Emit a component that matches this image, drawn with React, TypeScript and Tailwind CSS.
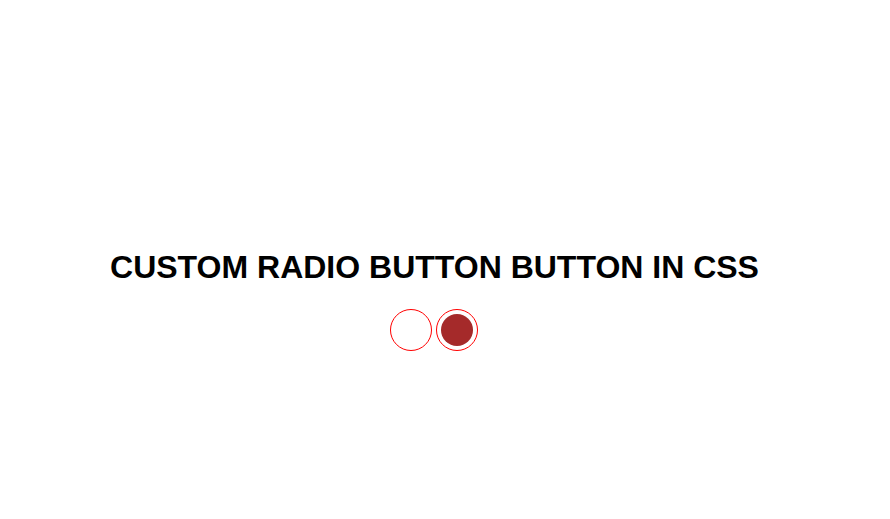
export default function App() {
  return (
    <div className="min-h-screen bg-white pt-[249px] pr-[21px] text-center font-['Liberation_Sans',Arial,sans-serif]">
      <h1 className="text-[32px] leading-[37px] font-bold text-black">CUSTOM RADIO BUTTON BUTTON IN CSS</h1>

      <div className="mt-[23px] flex justify-center gap-[4px] pr-[2px]">
        <label className="w-[42px] h-[42px] rounded-full border border-[#ff0000] p-[4px]">
          <input type="radio" name="demo" className="sr-only" />
        </label>
        <label className="w-[42px] h-[42px] rounded-full border border-[#ff0000] p-[4px]">
          <input type="radio" name="demo" defaultChecked className="sr-only" />
          <span className="block w-full h-full rounded-full bg-[#a52a2a]" />
        </label>
      </div>
    </div>
  )
}
